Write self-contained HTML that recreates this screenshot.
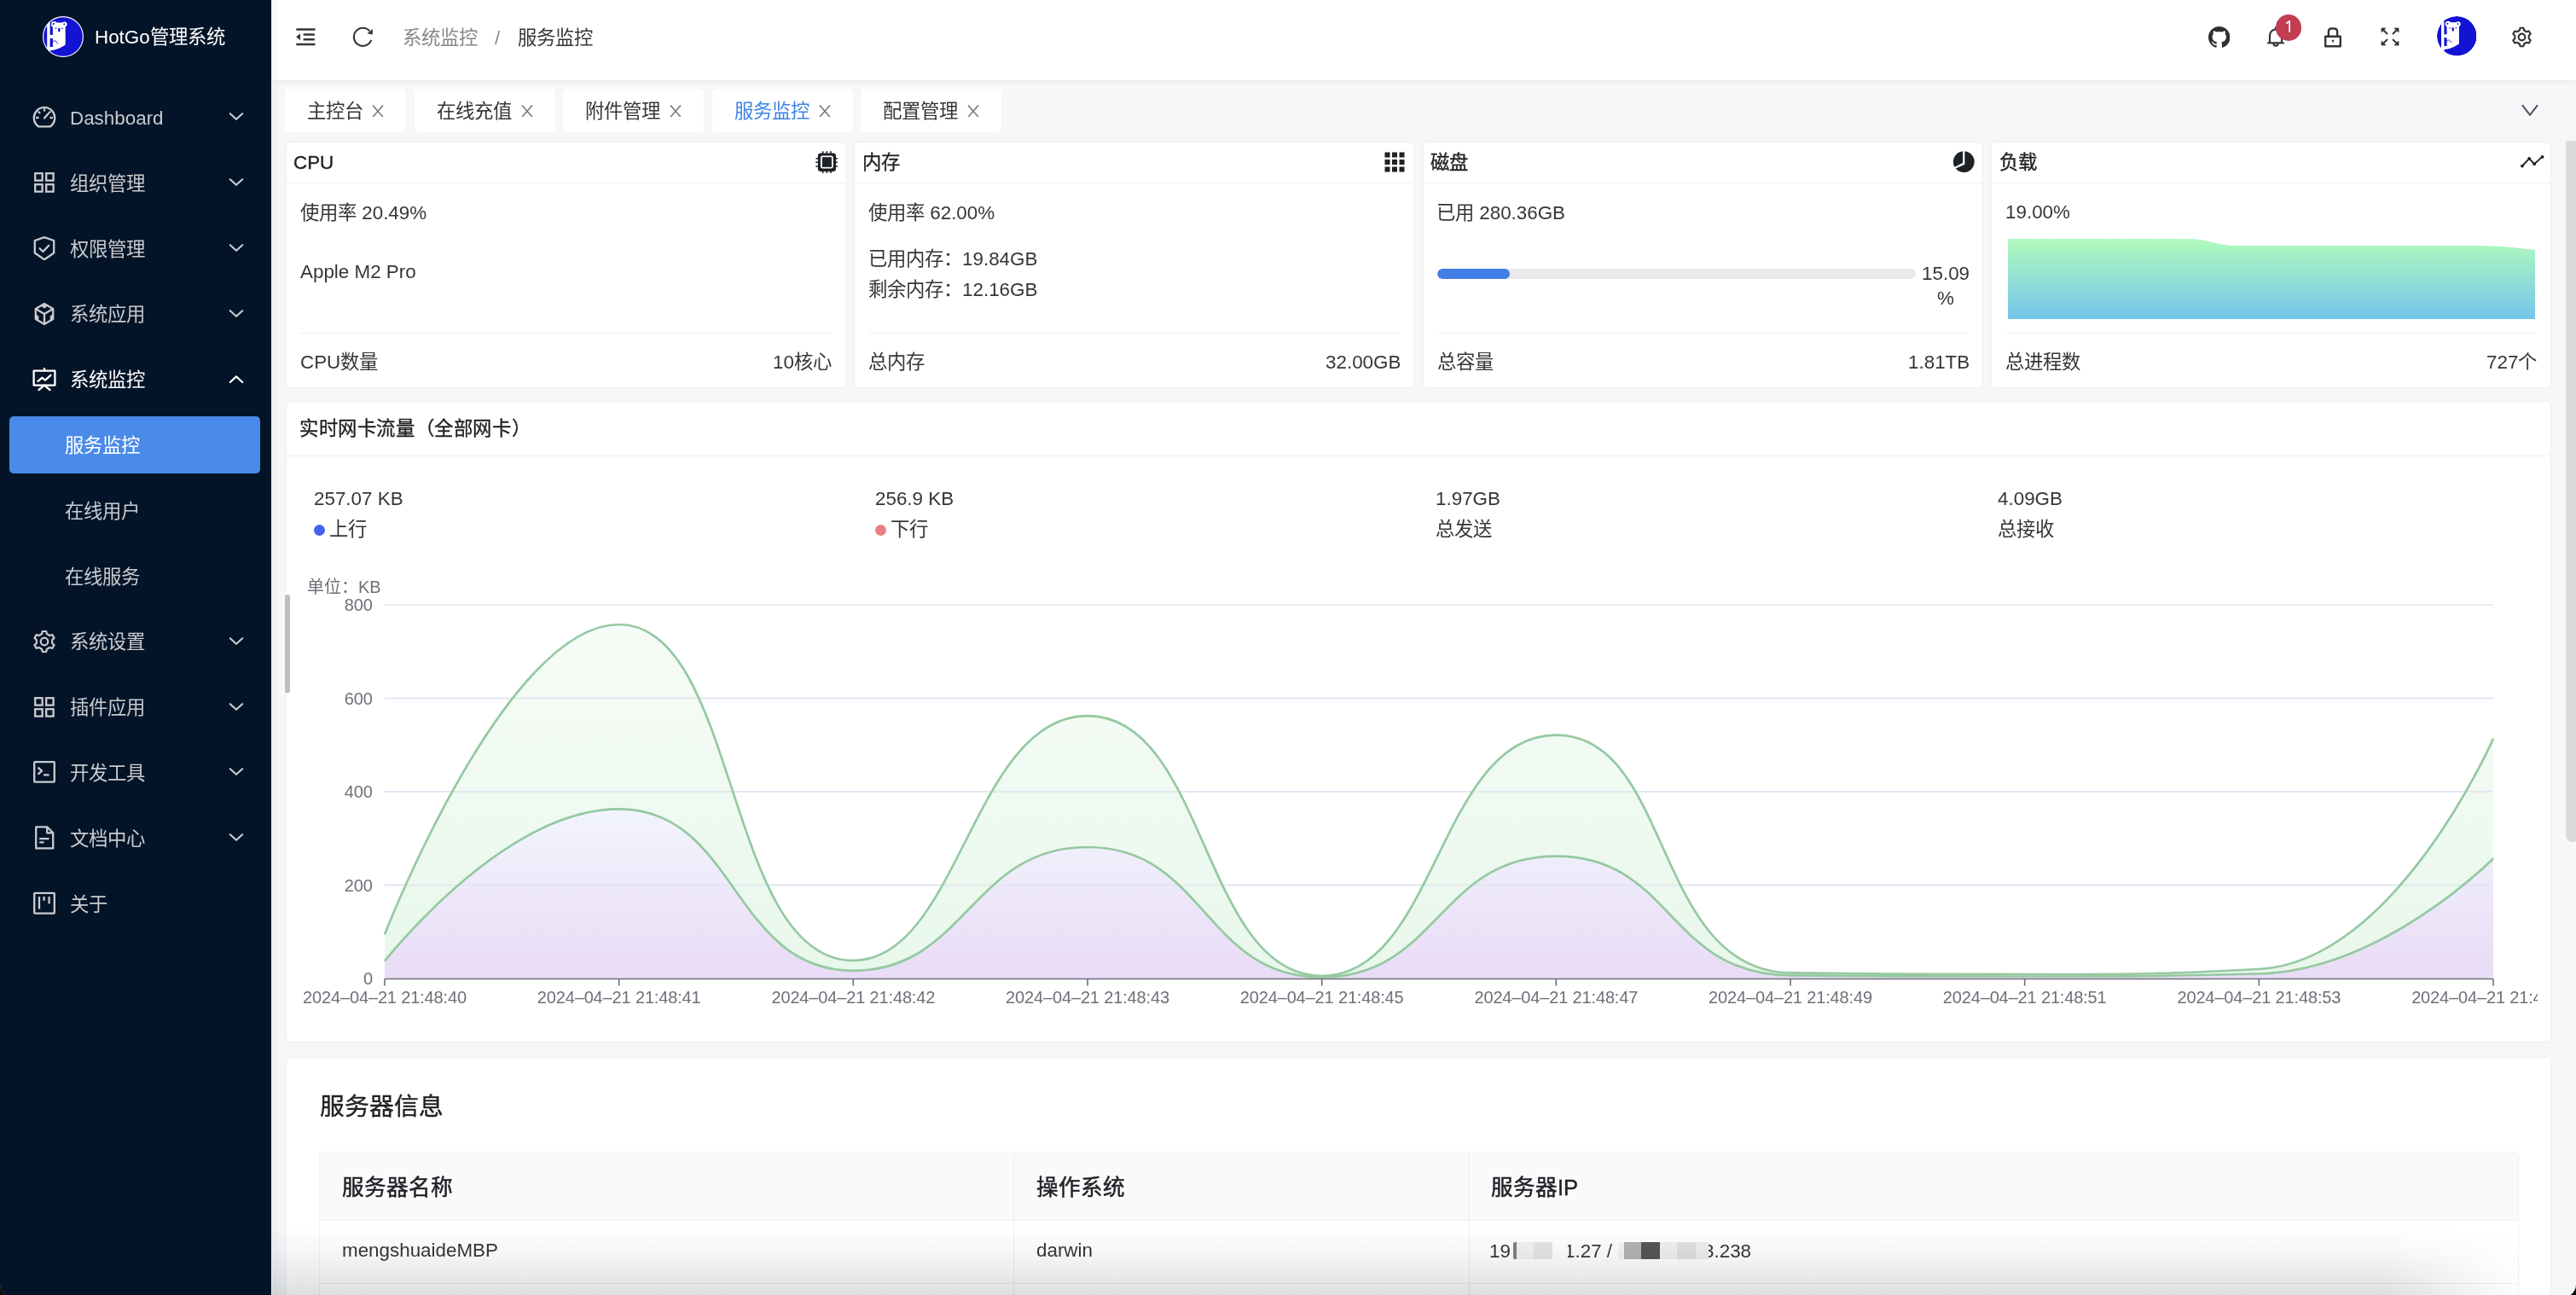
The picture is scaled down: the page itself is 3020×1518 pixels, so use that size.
<!DOCTYPE html>
<html lang="zh-CN">
<head>
<meta charset="utf-8">
<title>HotGo 服务监控</title>
<style>
*{box-sizing:border-box;margin:0;padding:0}
html,body{width:3020px;height:1518px;overflow:hidden;background:#f5f7f9;font-family:"Liberation Sans",sans-serif;color:#333639;font-size:22.4px;line-height:1}
.abs{position:absolute}
#sider{position:absolute;left:0;top:0;width:318px;height:1518px;background:#041428}
#sider .edge{position:absolute;left:318px;top:0;width:1px;height:1518px;background:#eef0f3}
.logo{position:absolute;left:50px;top:19px;width:48px;height:48px}
.brand{position:absolute;left:111px;top:32px;color:#fff;font-size:22.4px;line-height:24px;white-space:nowrap}
.mi{position:absolute;left:11px;width:294px;height:67.2px;border-radius:5px}
.mi .ic{position:absolute;left:27px;top:19.6px;width:28px;height:28px}
.mi .tx{position:absolute;left:71px;top:23.1px;line-height:24px;font-size:22.4px;color:#c9cbcf;white-space:nowrap}
.mi .tx.sub{left:64.5px}
.mi .cv{position:absolute;left:257px;top:24.6px;width:18px;height:18px}
.mi.sel{background:#4a8ae8}
.mi.sel .tx{color:#fff}
#header{position:absolute;left:319px;top:0;width:2701px;height:94px;background:#fff;box-shadow:0 1px 6px rgba(0,21,41,0.08)}
.crumb{position:absolute;top:33px;font-size:22.4px;line-height:24px;white-space:nowrap}
.tab{position:absolute;top:104px;height:51px;background:#fff;border-radius:5px}
.tab .t{position:absolute;left:26px;top:15px;line-height:24px;font-size:22.4px;white-space:nowrap}
.tab .x{position:absolute;top:18.5px;width:14px;height:14px}
.card{position:absolute;background:#fff;border:1px solid #efeff5;border-radius:5px}
.card .hd{position:absolute;left:0;top:0;right:0;height:48px;border-bottom:1px solid #efeff5}
.card .ttl{position:absolute;left:8.6px;top:12px;line-height:24px;font-size:22.4px;color:#1f2225;font-weight:500;white-space:nowrap;-webkit-text-stroke:0.35px #1f2225}
.card .hic{position:absolute;top:10px;right:9px;width:26px;height:26px}
.txt{position:absolute;line-height:24px;font-size:22.4px;white-space:nowrap;color:#333639}
.card .div{position:absolute;left:16px;right:16px;top:223px;height:1px;background:#efeff5}
.brand,.mi .tx,.crumb,.tab .t,.txt,.card .ttl,svg.chartsvg{will-change:transform}
</style>
</head>
<body>
<div id="sider">
  <svg class="logo" viewBox="0 0 48 48">
    <defs><clipPath id="lc"><circle cx="24" cy="24" r="23.6"/></clipPath></defs>
    <circle cx="24" cy="24" r="23.6" fill="#1313d3"/>
    <g clip-path="url(#lc)">
    <g fill="#fff">
      <rect x="5.2" y="0" width="3.6" height="44"/>
      <path d="M8.4,7.4 H26.7 V33.5 C22,36.5 15.5,40 8.4,40.3 Z"/>
    </g>
    <g fill="#1313d3">
      <rect x="8.7" y="0" width="3.2" height="21.9"/>
      <rect x="8.7" y="26" width="3.2" height="10"/>
    </g>
    <g fill="#fff"><circle cx="13.4" cy="9.4" r="3.4"/><circle cx="25.6" cy="9.4" r="3.0"/><rect x="12" y="8" width="14" height="6"/></g>
    <g fill="#1313d3">
      <ellipse cx="12.7" cy="9.0" rx="1.2" ry="1.0" transform="rotate(-35 12.7 9)"/><ellipse cx="25.3" cy="9.3" rx="1.0" ry="0.9" transform="rotate(35 25.3 9.3)"/>
      <circle cx="15.6" cy="14.1" r="0.8"/><circle cx="23" cy="14.3" r="0.8"/>
      <ellipse cx="19.3" cy="15.9" rx="1.3" ry="2.5"/>
    </g>
    <path d="M11.3,31.2 C11.8,28.6 15.6,27.2 17.5,32.3" stroke="#1313d3" stroke-width="0.9" fill="none"/>
    </g>
    <circle cx="24" cy="24" r="23.4" fill="none" stroke="#fff" stroke-width="1.1"/>
  </svg>
  <div class="brand">HotGo管理系统</div>
  <!-- menu items -->
  <div class="mi" style="top:103.9px">
    <svg class="ic" viewBox="0 0 28 28" fill="none" stroke="#c9cbcf" stroke-width="2.3" stroke-linecap="round"><path d="M7.2,25.3 A12.2,12.2 0 1 1 20.8,25.3 Z" stroke-linejoin="round"/><path d="M14,5.2 V6.8 M7.5,8.3 L8.5,9.3 M20.5,8.3 L19.5,9.3 M5,15 H6.6 M21.4,15 H23 M14,15.5 L18.2,10.8"/></svg>
    <div class="tx">Dashboard</div>
    <svg class="cv" viewBox="0 0 18 18" fill="none" stroke="#c9cbcf" stroke-width="2.2" stroke-linecap="round" stroke-linejoin="round"><path d="M1.8,5.2 L9,11.8 L16.2,5.2"/></svg>
  </div>
  <div class="mi" style="top:180.7px">
    <svg class="ic" viewBox="0 0 28 28" fill="none" stroke="#c9cbcf" stroke-width="2.3"><rect x="3.2" y="3.2" width="8.4" height="8.4"/><rect x="16.2" y="3.2" width="8.4" height="8.4"/><rect x="3.2" y="16.2" width="8.4" height="8.4"/><rect x="16.2" y="16.2" width="8.4" height="8.4"/></svg>
    <div class="tx">组织管理</div>
    <svg class="cv" viewBox="0 0 18 18" fill="none" stroke="#c9cbcf" stroke-width="2.2" stroke-linecap="round" stroke-linejoin="round"><path d="M1.8,5.2 L9,11.8 L16.2,5.2"/></svg>
  </div>
  <div class="mi" style="top:257.5px">
    <svg class="ic" viewBox="0 0 28 28" fill="none" stroke="#c9cbcf" stroke-width="2.3" stroke-linejoin="round" stroke-linecap="round"><path d="M14,1.2 L25.2,5 L25.2,19.5 L14,27.3 L2.8,19.5 L2.8,5 Z"/><path d="M8.6,14.2 L12.4,18 L19.2,10.8"/></svg>
    <div class="tx">权限管理</div>
    <svg class="cv" viewBox="0 0 18 18" fill="none" stroke="#c9cbcf" stroke-width="2.2" stroke-linecap="round" stroke-linejoin="round"><path d="M1.8,5.2 L9,11.8 L16.2,5.2"/></svg>
  </div>
  <div class="mi" style="top:334.3px">
    <svg class="ic" viewBox="0 0 28 28" fill="none" stroke="#c9cbcf" stroke-width="2.3" stroke-linejoin="round"><path d="M14,2 L24.2,8 L24.2,20 L14,26 L3.8,20 L3.8,8 Z"/><path d="M3.8,8 L14,14 L24.2,8 M14,14 V26"/><path d="M10.4,4.2 L14,7.2 L17.6,4.2 L14,2 Z M3.8,14.8 L6.8,16.6 L6.8,21.8 L3.8,20 Z M24.2,14.8 L21.2,16.6 L21.2,21.8 L24.2,20 Z" fill="#c9cbcf" stroke-width="1"/></svg>
    <div class="tx">系统应用</div>
    <svg class="cv" viewBox="0 0 18 18" fill="none" stroke="#c9cbcf" stroke-width="2.2" stroke-linecap="round" stroke-linejoin="round"><path d="M1.8,5.2 L9,11.8 L16.2,5.2"/></svg>
  </div>
  <div class="mi" style="top:411.1px">
    <svg class="ic" viewBox="0 0 28 28" fill="none" stroke="#ffffff" stroke-width="2.3" stroke-linecap="round" stroke-linejoin="round"><rect x="1.6" y="3.6" width="24.8" height="17"/><path d="M14,0.8 V3.6 M14,20.6 L7.5,26 M14,20.6 L20.5,26 M6.5,15.8 L11.2,11.8 L15,14.6 L21.4,8.8"/></svg>
    <div class="tx" style="color:#fff">系统监控</div>
    <svg class="cv" viewBox="0 0 18 18" fill="none" stroke="#ffffff" stroke-width="2.2" stroke-linecap="round" stroke-linejoin="round"><path d="M1.8,12 L9,5.4 L16.2,12"/></svg>
  </div>
  <div class="mi sel" style="top:487.9px">
    <div class="tx sub">服务监控</div>
  </div>
  <div class="mi" style="top:564.7px">
    <div class="tx sub">在线用户</div>
  </div>
  <div class="mi" style="top:641.5px">
    <div class="tx sub">在线服务</div>
  </div>
  <div class="mi" style="top:718.3px">
    <svg class="ic" viewBox="0 0 28 28" fill="none" stroke="#c9cbcf" stroke-width="2.2" stroke-linejoin="round"><path d="M11.84,1.99 L16.16,1.99 L16.90,5.06 L20.29,7.01 L23.32,6.13 L25.48,9.87 L23.19,12.05 L23.19,15.95 L25.48,18.13 L23.32,21.87 L20.29,20.99 L16.90,22.94 L16.16,26.01 L11.84,26.01 L11.10,22.94 L7.71,20.99 L4.68,21.87 L2.52,18.13 L4.81,15.95 L4.81,12.05 L2.52,9.87 L4.68,6.13 L7.71,7.01 L11.10,5.06 Z"/><circle cx="14" cy="14" r="4.3"/></svg>
    <div class="tx">系统设置</div>
    <svg class="cv" viewBox="0 0 18 18" fill="none" stroke="#c9cbcf" stroke-width="2.2" stroke-linecap="round" stroke-linejoin="round"><path d="M1.8,5.2 L9,11.8 L16.2,5.2"/></svg>
  </div>
  <div class="mi" style="top:795.1px">
    <svg class="ic" viewBox="0 0 28 28" fill="none" stroke="#c9cbcf" stroke-width="2.3"><rect x="3.2" y="3.2" width="8.4" height="8.4"/><rect x="16.2" y="3.2" width="8.4" height="8.4"/><rect x="3.2" y="16.2" width="8.4" height="8.4"/><rect x="16.2" y="16.2" width="8.4" height="8.4"/></svg>
    <div class="tx">插件应用</div>
    <svg class="cv" viewBox="0 0 18 18" fill="none" stroke="#c9cbcf" stroke-width="2.2" stroke-linecap="round" stroke-linejoin="round"><path d="M1.8,5.2 L9,11.8 L16.2,5.2"/></svg>
  </div>
  <div class="mi" style="top:871.9px">
    <svg class="ic" viewBox="0 0 28 28" fill="none" stroke="#c9cbcf" stroke-width="2.3" stroke-linejoin="round"><rect x="2.2" y="2.2" width="23.6" height="23.4" rx="0.8"/><path d="M6.6,8.6 L11,12.6 L6.6,16.6 M13,17.3 H19.6"/></svg>
    <div class="tx">开发工具</div>
    <svg class="cv" viewBox="0 0 18 18" fill="none" stroke="#c9cbcf" stroke-width="2.2" stroke-linecap="round" stroke-linejoin="round"><path d="M1.8,5.2 L9,11.8 L16.2,5.2"/></svg>
  </div>
  <div class="mi" style="top:948.7px">
    <svg class="ic" viewBox="0 0 28 28" fill="none" stroke="#c9cbcf" stroke-width="2.3" stroke-linejoin="round"><path d="M4.2,1.3 H17.2 L24.2,8.3 V26.4 H4.2 Z M17.2,1.3 V8.3 H24.2"/><path d="M8.2,15.2 H19.5 M8.2,19.3 H13.5"/></svg>
    <div class="tx">文档中心</div>
    <svg class="cv" viewBox="0 0 18 18" fill="none" stroke="#c9cbcf" stroke-width="2.2" stroke-linecap="round" stroke-linejoin="round"><path d="M1.8,5.2 L9,11.8 L16.2,5.2"/></svg>
  </div>
  <div class="mi" style="top:1025.5px">
    <svg class="ic" viewBox="0 0 28 28" fill="none" stroke="#c9cbcf" stroke-width="2.3" stroke-linejoin="round"><rect x="2.2" y="1.8" width="23.6" height="23.8" rx="0.8"/><path d="M8,6 V20.5 M13.6,6 V10.8 M19.6,6 V14.2"/></svg>
    <div class="tx">关于</div>
  </div>
  <div class="edge"></div>
</div>
<div id="header">
  <!-- fold icon -->
  <svg class="abs" style="left:27px;top:32px" width="24" height="22" viewBox="0 0 24 22" fill="none" stroke="#333639" stroke-width="2.5"><path d="M1.3,2.4 H23.6 M9.6,8.4 H22.8 M9.6,14.3 H22.8 M1.3,20.1 H23.6"/><path d="M1.2,11.3 L6,7.3 V15.3 Z" fill="#333639" stroke="none"/></svg>
  <!-- refresh -->
  <svg class="abs" style="left:93px;top:30px" width="27" height="27" viewBox="0 0 27 27" fill="none" stroke="#333639" stroke-width="2.1"><path d="M23.23,16.98 A10.5,10.5 0 1 1 21.26,6.34"/><path d="M24.6,4.6 L24.6,10.2 L19,9 Z" fill="#333639" stroke="#333639" stroke-width="0.6" stroke-linejoin="round"/></svg>
  <div class="crumb" style="left:152.5px;color:#86888c">系统监控</div>
  <div class="crumb" style="left:260.5px;color:#86888c">/</div>
  <div class="crumb" style="left:288px;color:#333639">服务监控</div>
  <!-- github -->
  <svg class="abs" style="left:2269.8px;top:31px" width="25.5" height="25.5" viewBox="0 0 16 16" fill="#2f3235"><path d="M8 0C3.58 0 0 3.58 0 8c0 3.54 2.29 6.53 5.47 7.59.4.07.55-.17.55-.38 0-.19-.01-.82-.01-1.49-2.01.37-2.53-.49-2.69-.94-.09-.23-.48-.94-.82-1.13-.28-.15-.68-.52-.01-.53.63-.01 1.08.58 1.23.82.72 1.210 1.87.87 2.33.66.07-.52.28-.87.51-1.07-1.78-.2-3.64-.89-3.64-3.95 0-.87.31-1.59.82-2.15-.08-.2-.36-1.02.08-2.12 0 0 .67-.21 2.2.82.64-.18 1.32-.27 2-.27.68 0 1.36.09 2 .27 1.53-1.04 2.2-.82 2.2-.82.44 1.1.16 1.92.08 2.12.51.56.82 1.27.82 2.15 0 3.07-1.87 3.75-3.65 3.95.29.25.54.73.54 1.48 0 1.07-.01 1.93-.01 2.2 0 .21.15.46.55.38A8.013 8.013 0 0016 8c0-4.42-3.58-8-8-8z"/></svg>
  <!-- bell -->
  <svg class="abs" style="left:2338px;top:30px" width="22" height="27" viewBox="0 0 22 27" fill="none" stroke="#333639" stroke-width="2.2" stroke-linejoin="round"><path d="M4,19.5 V11.5 A7,7 0 0 1 18,11.5 V19.5"/><path d="M1.2,20.3 H20.8"/><path d="M8.4,21 A2.6,2.6 0 0 0 13.6,21"/><path d="M11,2.2 V4.4" stroke-linecap="round"/></svg>
  <div class="abs" style="left:2348.7px;top:17px;width:30.7px;height:30.7px;border-radius:50%;background:#c23d52;color:#fff;font-size:19.2px;"><svg class="abs" style="left:10px;top:7.3px" width="10" height="14" viewBox="0 0 10 14" fill="none" stroke="#fff" stroke-width="1.7" stroke-linejoin="round"><path d="M6.2,13.8 V0.8 L2.2,3.6"/></svg></div>
  <!-- lock -->
  <svg class="abs" style="left:2405px;top:31px" width="22" height="25" viewBox="0 0 22 25" fill="none" stroke="#333639" stroke-width="2.4" stroke-linejoin="round"><rect x="2.2" y="11.8" width="17.6" height="11.4"/><path d="M5.9,11.8 V6 Q5.9,2.5 9.4,2.5 H12.6 Q16.1,2.5 16.1,6 V11.8"/><path d="M10,16.2 H12 L11,18.6 Z" fill="#333639" stroke-width="0.8"/></svg>
  <!-- fullscreen (exit) -->
  <svg class="abs" style="left:2472px;top:32px" width="22" height="22" viewBox="0 0 22 22" fill="none" stroke="#333639" stroke-width="2.0"><path d="M2,2 L8,8 M20,2 L14,8 M2,20 L8,14 M20,20 L14,14"/><path d="M1,1 H5.8 L1,5.8 Z M21,1 H16.2 L21,5.8 Z M1,21 H5.8 L1,16.2 Z M21,21 H16.2 L21,16.2 Z" fill="#333639" stroke-width="0.8" stroke-linejoin="round"/></svg>
  <!-- avatar -->
  <svg class="abs" style="left:2537.7px;top:19.3px" width="46.6" height="46.6" viewBox="0 0 48 48">
    <defs><clipPath id="ac"><circle cx="24" cy="24" r="24"/></clipPath></defs>
    <g clip-path="url(#ac)">
    <circle cx="24" cy="24" r="24" fill="#1313d3"/>
    <g fill="#fff">
      <rect x="5.2" y="0" width="3.6" height="44"/>
      <path d="M8.4,7.4 H26.7 V33.5 C22,36.5 15.5,40 8.4,40.3 Z"/>
    </g>
    <g fill="#1313d3">
      <rect x="8.7" y="0" width="3.2" height="21.9"/>
      <rect x="8.7" y="26" width="3.2" height="10"/>
    </g>
    <g fill="#fff"><circle cx="13.4" cy="9.4" r="3.4"/><circle cx="25.6" cy="9.4" r="3.0"/><rect x="12" y="8" width="14" height="6"/></g>
    <g fill="#1313d3">
      <ellipse cx="12.7" cy="9.0" rx="1.2" ry="1.0" transform="rotate(-35 12.7 9)"/><ellipse cx="25.3" cy="9.3" rx="1.0" ry="0.9" transform="rotate(35 25.3 9.3)"/>
      <circle cx="15.6" cy="14.1" r="0.8"/><circle cx="23" cy="14.3" r="0.8"/>
      <ellipse cx="19.3" cy="15.9" rx="1.3" ry="2.5"/>
    </g>
    <path d="M11.3,31.2 C11.8,28.6 15.6,27.2 17.5,32.3" stroke="#1313d3" stroke-width="0.9" fill="none"/>
    </g>
  </svg>
  <!-- gear -->
  <svg class="abs" style="left:2625px;top:31px" width="25" height="25" viewBox="0 0 28 28" fill="none" stroke="#333639" stroke-width="2.4" stroke-linejoin="round"><path d="M11.84,1.99 L16.16,1.99 L16.90,5.06 L20.29,7.01 L23.32,6.13 L25.48,9.87 L23.19,12.05 L23.19,15.95 L25.48,18.13 L23.32,21.87 L20.29,20.99 L16.90,22.94 L16.16,26.01 L11.84,26.01 L11.10,22.94 L7.71,20.99 L4.68,21.87 L2.52,18.13 L4.81,15.95 L4.81,12.05 L2.52,9.87 L4.68,6.13 L7.71,7.01 L11.10,5.06 Z"/><circle cx="14" cy="14" r="4.3"/></svg>
</div>
<div class="abs" style="left:319px;top:0;width:10px;height:1518px;background:linear-gradient(to right,rgba(0,10,20,0.03),rgba(0,10,20,0));pointer-events:none"></div>
<div class="tab" style="left:333.8px;width:142.2px"><div class="t">主控台</div><svg class="x" height="14.6" style="left:102.5px" viewBox="0 0 14 14" stroke="#6f737b" stroke-width="1.45" fill="none"><path d="M1,0.4 L13,14.2 M13,0.4 L1,14.2"/></svg></div>
<div class="tab" style="left:485.7px;width:165px"><div class="t">在线充值</div><svg class="x" height="14.6" style="left:125px" viewBox="0 0 14 14" stroke="#6f737b" stroke-width="1.45" fill="none"><path d="M1,0.4 L13,14.2 M13,0.4 L1,14.2"/></svg></div>
<div class="tab" style="left:660px;width:164.7px"><div class="t">附件管理</div><svg class="x" height="14.6" style="left:125px" viewBox="0 0 14 14" stroke="#6f737b" stroke-width="1.45" fill="none"><path d="M1,0.4 L13,14.2 M13,0.4 L1,14.2"/></svg></div>
<div class="tab" style="left:834.8px;width:165px"><div class="t" style="color:#3d84e6">服务监控</div><svg class="x" height="14.6" style="left:125px" viewBox="0 0 14 14" stroke="#6f737b" stroke-width="1.45" fill="none"><path d="M1,0.4 L13,14.2 M13,0.4 L1,14.2"/></svg></div>
<div class="tab" style="left:1009px;width:164.7px"><div class="t">配置管理</div><svg class="x" height="14.6" style="left:125px" viewBox="0 0 14 14" stroke="#6f737b" stroke-width="1.45" fill="none"><path d="M1,0.4 L13,14.2 M13,0.4 L1,14.2"/></svg></div>
<svg class="abs" style="left:2956px;top:122px" width="20" height="14" viewBox="0 0 20 14" fill="none" stroke="#4f5359" stroke-width="2" stroke-linejoin="round"><path d="M1,1.2 L10,12.8 L19,1.2"/></svg>
<!-- page scrollbar -->
<div class="abs" style="left:3008px;top:165px;width:12px;height:1353px;background:#f7f7f7"></div>
<div class="abs" style="left:3008px;top:165px;width:16px;height:822px;background:#dbdbdb;border-radius:0 0 8px 8px"></div>
<!-- CPU -->
<div class="card" style="left:334.7px;top:165.9px;width:657.1px;height:289px">
  <div class="hd"><div class="ttl">CPU</div>
    <svg class="hic" style="right:9px;top:10px" width="26" height="26" viewBox="0 0 26 26"><path d="M8.7,0.9 V3 M13.3,0.9 V3 M18,0.9 V3 M8.7,23.5 V25.6 M13.3,23.5 V25.6 M18,23.5 V25.6 M0.9,8.7 H3 M0.9,13.3 H3 M0.9,18 H3 M23.5,8.7 H25.6 M23.5,13.3 H25.6 M23.5,18 H25.6" stroke="#1f2225" stroke-width="1.6" stroke-linecap="round"/><rect x="2.9" y="2.5" width="21.1" height="21.5" rx="3.2" fill="#1f2225"/><rect x="6.9" y="6.4" width="13" height="13.2" rx="1.5" fill="none" stroke="#fff" stroke-width="1.9"/><rect x="8.2" y="7.7" width="10.6" height="10.8" fill="#1f2225"/></svg>
  </div>
  <div class="txt" style="left:16px;top:71.5px">使用率 20.49%</div>
  <div class="txt" style="left:16px;top:140px">Apple M2 Pro</div>
  <div class="div"></div>
  <div class="txt" style="left:16px;top:246.5px">CPU数量</div>
  <div class="txt" style="right:16px;top:246.5px">10核心</div>
</div>
<!-- MEM -->
<div class="card" style="left:1001.4px;top:165.9px;width:656.6px;height:289px">
  <div class="hd"><div class="ttl">内存</div>
    <svg class="hic" style="right:10px;top:11px;width:24px;height:24px" width="24" height="24" viewBox="0 0 24 24" fill="#1f2225"><rect x="0.5" y="0.5" width="6" height="6"/><rect x="9" y="0.5" width="6" height="6"/><rect x="17.5" y="0.5" width="6" height="6"/><rect x="0.5" y="9" width="6" height="6"/><rect x="9" y="9" width="6" height="6"/><rect x="17.5" y="9" width="6" height="6"/><rect x="0.5" y="17.5" width="6" height="6"/><rect x="9" y="17.5" width="6" height="6"/><rect x="17.5" y="17.5" width="6" height="6"/></svg>
  </div>
  <div class="txt" style="left:16px;top:71.5px">使用率 62.00%</div>
  <div class="txt" style="left:16px;top:125px">已用内存：19.84GB</div>
  <div class="txt" style="left:16px;top:161px">剩余内存：12.16GB</div>
  <div class="div"></div>
  <div class="txt" style="left:16px;top:246.5px">总内存</div>
  <div class="txt" style="right:14.5px;top:246.5px">32.00GB</div>
</div>
<!-- DISK -->
<div class="card" style="left:1667.8px;top:165.9px;width:657.2px;height:289px">
  <div class="hd"><div class="ttl">磁盘</div>
    <svg class="hic" style="right:7.8px;top:10.5px" width="26" height="26" viewBox="0 -0.3 26 26" fill="#1f2225"><path d="M11.1,-0.04 V13.6 L1.56,18.5 A12.4,12.4 0 0 1 11.1,-0.04 Z"/><path d="M13.4,-0.04 A12.4,12.4 0 1 1 2.7,20.15 L13.4,15.4 Z"/></svg>
  </div>
  <div class="txt" style="left:15px;top:71.5px">已用 280.36GB</div>
  <div class="abs" style="left:16.3px;top:148px;width:561px;height:12.6px;border-radius:7px;background:#e9e9ea;overflow:hidden"><div style="width:84.7px;height:100%;background:#427ee5;border-radius:7px"></div></div>
  <div class="txt" style="left:584px;top:139px;width:56px;text-align:center;white-space:normal;line-height:29px">15.09<br>%</div>
  <div class="div"></div>
  <div class="txt" style="left:16px;top:246.5px">总容量</div>
  <div class="txt" style="right:14.5px;top:246.5px">1.81TB</div>
</div>
<!-- LOAD -->
<div class="card" style="left:2334.2px;top:165.9px;width:656.8px;height:289px">
  <div class="hd"><div class="ttl">负载</div>
    <svg class="hic" style="right:7px;top:15.5px;width:28px;height:15px" width="28" height="15" viewBox="0 0 28 15" fill="none" stroke="#1f2225" stroke-width="1.9"><path d="M1.6,13 L10.2,3.8 L16.2,10.2 L25.6,1.6"/><g fill="#1f2225" stroke="none"><circle cx="1.9" cy="12.6" r="1.9"/><circle cx="10.2" cy="3.8" r="1.9"/><circle cx="16.2" cy="10.2" r="1.9"/><circle cx="25.6" cy="1.9" r="1.9"/></g></svg>
  </div>
  <div class="txt" style="left:16px;top:70px">19.00%</div>
  <svg class="abs" style="left:19.1px;top:112.2px" width="618" height="95" viewBox="0 0 618 95"><defs><linearGradient id="lg" x1="0" y1="0" x2="0" y2="1"><stop offset="0" stop-color="#b1fabd"/><stop offset="1" stop-color="#74c5eb"/></linearGradient></defs><path d="M0,1 H211 C233,1 246,9 268,9 H552 C580,9 600,12 618,14 V95 H0 Z" fill="url(#lg)"/></svg>
  <div class="div"></div>
  <div class="txt" style="left:16px;top:246.5px">总进程数</div>
  <div class="txt" style="right:16px;top:246.5px">727个</div>
</div>
<!-- NET CHART CARD -->
<div class="card" style="left:334.7px;top:469.8px;width:2656.3px;height:752.2px">
  <div class="hd" style="height:64.5px"><div class="ttl" style="left:15.5px;top:20.5px;letter-spacing:0.6px">实时网卡流量（全部网卡）</div></div>
  <div class="txt" style="left:32px;top:102.5px">257.07 KB</div>
  <div class="abs" style="left:32.3px;top:144.7px;width:13px;height:13px;border-radius:50%;background:#4263eb"></div>
  <div class="txt" style="left:50px;top:138.5px">上行</div>
  <div class="txt" style="left:690px;top:102.5px">256.9 KB</div>
  <div class="abs" style="left:690.3px;top:144.7px;width:13px;height:13px;border-radius:50%;background:#e88080"></div>
  <div class="txt" style="left:708px;top:138.5px">下行</div>
  <div class="txt" style="left:1347.5px;top:102.5px">1.97GB</div>
  <div class="txt" style="left:1347.5px;top:138.5px">总发送</div>
  <div class="txt" style="left:2006.5px;top:102.5px">4.09GB</div>
  <div class="txt" style="left:2006.5px;top:138.5px">总接收</div>
</div>
<svg class="abs chartsvg" style="left:0;top:0" width="3020" height="1518" viewBox="0 0 3020 1518">
  <defs>
    <linearGradient id="gLo" x1="0" y1="0" x2="0" y2="1"><stop offset="0" stop-color="#f2f5fd"/><stop offset="1" stop-color="#e9dbf6"/></linearGradient>
    <linearGradient id="gUp" x1="0" y1="0" x2="0" y2="1"><stop offset="0" stop-color="#f5fcf6"/><stop offset="1" stop-color="#e6f6e9"/></linearGradient>
    <clipPath id="cc"><rect x="335" y="470" width="2640" height="752"/></clipPath>
  </defs>
  <g font-family="Liberation Sans, sans-serif" font-size="20" fill="#6e7079">
    <text x="360" y="695">单位：KB</text>
    <g text-anchor="end">
      <text x="437" y="716">800</text>
      <text x="437" y="825.5">600</text>
      <text x="437" y="935">400</text>
      <text x="437" y="1044.5">200</text>
      <text x="437" y="1154">0</text>
    </g>
  </g>
  <g stroke="#e0e6f1" stroke-width="1.6">
    <path d="M451,709 H2923 M451,818.5 H2923 M451,928 H2923 M451,1037.5 H2923"/>
  </g>
  <path d="M451.00,1126.70 C451.00,1126.70 589.62,948.40 725.67,948.40 C864.29,948.40 858.07,1137.80 1000.34,1137.80 C1132.74,1137.80 1138.48,993.00 1275.01,993.00 C1413.15,993.00 1411.24,1145.50 1549.68,1145.50 C1685.91,1145.50 1686.80,1003.60 1824.35,1003.60 C1961.47,1003.60 1953.79,1142.17 2099.02,1143.40 C2228.46,1144.50 2236.36,1144.50 2373.69,1144.50 C2511.03,1144.50 2518.47,1144.50 2648.36,1141.50 C2793.14,1138.16 2923.03,1006.20 2923.03,1006.20 L2923.03,1147.50 L451.00,1147.50 Z" fill="url(#gLo)"/>
  <path d="M451.00,1095.30 C451.00,1095.30 591.97,732.00 725.67,732.00 C866.64,732.00 849.98,1125.90 1000.34,1125.90 C1124.65,1125.90 1139.93,839.20 1275.01,839.20 C1414.60,839.20 1409.54,1144.00 1549.68,1144.00 C1684.21,1144.00 1686.57,861.70 1824.35,861.70 C1961.24,861.70 1937.63,1138.12 2099.02,1140.40 C2212.30,1142.00 2236.37,1142.00 2373.69,1142.00 C2511.04,1142.00 2534.05,1142.00 2648.36,1136.00 C2808.72,1127.58 2923.03,865.60 2923.03,865.60 L2923.03,1006.20 C2923.03,1006.20 2793.14,1138.16 2648.36,1141.50 C2518.47,1144.50 2511.03,1144.50 2373.69,1144.50 C2236.36,1144.50 2228.46,1144.50 2099.02,1143.40 C1953.79,1142.17 1961.47,1003.60 1824.35,1003.60 C1686.80,1003.60 1685.91,1145.50 1549.68,1145.50 C1411.24,1145.50 1413.15,993.00 1275.01,993.00 C1138.48,993.00 1132.74,1137.80 1000.34,1137.80 C858.07,1137.80 864.29,948.40 725.67,948.40 C589.62,948.40 451.00,1126.70 451.00,1126.70 Z" fill="url(#gUp)" fill-opacity="0.9"/>
  <path d="M451,818.5 H2923 M451,928 H2923 M451,1037.5 H2923" stroke="#dde3f1" stroke-width="1.6" opacity="0.95"/>
  <path d="M451.00,1126.70 C451.00,1126.70 589.62,948.40 725.67,948.40 C864.29,948.40 858.07,1137.80 1000.34,1137.80 C1132.74,1137.80 1138.48,993.00 1275.01,993.00 C1413.15,993.00 1411.24,1145.50 1549.68,1145.50 C1685.91,1145.50 1686.80,1003.60 1824.35,1003.60 C1961.47,1003.60 1953.79,1142.17 2099.02,1143.40 C2228.46,1144.50 2236.36,1144.50 2373.69,1144.50 C2511.03,1144.50 2518.47,1144.50 2648.36,1141.50 C2793.14,1138.16 2923.03,1006.20 2923.03,1006.20" fill="none" stroke="#95c9a1" stroke-width="2.7"/>
  <path d="M451.00,1095.30 C451.00,1095.30 591.97,732.00 725.67,732.00 C866.64,732.00 849.98,1125.90 1000.34,1125.90 C1124.65,1125.90 1139.93,839.20 1275.01,839.20 C1414.60,839.20 1409.54,1144.00 1549.68,1144.00 C1684.21,1144.00 1686.57,861.70 1824.35,861.70 C1961.24,861.70 1937.63,1138.12 2099.02,1140.40 C2212.30,1142.00 2236.37,1142.00 2373.69,1142.00 C2511.04,1142.00 2534.05,1142.00 2648.36,1136.00 C2808.72,1127.58 2923.03,865.60 2923.03,865.60" fill="none" stroke="#95c9a1" stroke-width="2.7"/>
  <g stroke="#6e7079" stroke-width="1.6">
    <path d="M451,1147.5 H2923"/>
    <path d="M451.00,1147.5 V1155.5 M725.67,1147.5 V1155.5 M1000.34,1147.5 V1155.5 M1275.01,1147.5 V1155.5 M1549.68,1147.5 V1155.5 M1824.35,1147.5 V1155.5 M2099.02,1147.5 V1155.5 M2373.69,1147.5 V1155.5 M2648.36,1147.5 V1155.5 M2923.03,1147.5 V1155.5"/>
  </g>
  <g clip-path="url(#cc)" font-family="Liberation Sans, sans-serif" font-size="20" fill="#6e7079" text-anchor="middle" letter-spacing="-0.15">
    <text x="451.00" y="1176">2024–04–21 21:48:40</text>
<text x="725.67" y="1176">2024–04–21 21:48:41</text>
<text x="1000.34" y="1176">2024–04–21 21:48:42</text>
<text x="1275.01" y="1176">2024–04–21 21:48:43</text>
<text x="1549.68" y="1176">2024–04–21 21:48:45</text>
<text x="1824.35" y="1176">2024–04–21 21:48:47</text>
<text x="2099.02" y="1176">2024–04–21 21:48:49</text>
<text x="2373.69" y="1176">2024–04–21 21:48:51</text>
<text x="2648.36" y="1176">2024–04–21 21:48:53</text>
<text x="2923.03" y="1176">2024–04–21 21:48:55</text>
  </g>
  <!-- inner scrollbar thumb -->
  <rect x="334" y="697" width="6" height="115.6" rx="3" fill="#bfbfbf"/>
</svg>
<!-- SERVER INFO CARD -->
<div class="card" style="left:334.7px;top:1239.2px;width:2656.3px;height:400px">
  <div class="txt" style="left:39px;top:42px;font-size:28.8px;line-height:30px;color:#1f2225;-webkit-text-stroke:0.4px #1f2225">服务器信息</div>
  <div class="abs" style="left:38.7px;top:109.8px;width:2579px;height:300px;border:1px solid #efeff5;border-radius:5px;overflow:hidden">
    <div class="abs" style="left:0;top:0;width:100%;height:80px;background:#fafafc;border-bottom:1px solid #efeff5"></div>
    <div class="abs" style="left:813px;top:0;width:1px;height:300px;background:#efeff5"></div>
    <div class="abs" style="left:1347px;top:0;width:1px;height:300px;background:#efeff5"></div>
    <div class="abs" style="left:0;top:153px;width:100%;height:1px;background:#efeff5"></div>
    <div class="txt" style="left:26px;top:28px;font-size:25.6px;line-height:26px;color:#1f2225;-webkit-text-stroke:0.5px #1f2225">服务器名称</div>
    <div class="txt" style="left:840px;top:28px;font-size:25.6px;line-height:26px;color:#1f2225;-webkit-text-stroke:0.5px #1f2225">操作系统</div>
    <div class="txt" style="left:1373px;top:28px;font-size:25.6px;line-height:26px;color:#1f2225;-webkit-text-stroke:0.5px #1f2225">服务器IP</div>
    <div class="txt" style="left:26px;top:103px">mengshuaideMBP</div>
    <div class="txt" style="left:840px;top:103px">darwin</div>
    
  </div>
</div>
<!-- IP redacted -->
<div class="txt" style="left:1745.5px;top:1454.5px">19</div>
<div class="txt" style="left:1834px;top:1454.5px">1.27 /</div>
<div class="txt" style="left:1997px;top:1454.5px">3.238</div>
<div class="abs" style="left:1773.5px;top:1456px;width:4.5px;height:20px;background:#808080;border-radius:2px 0 0 2px"></div>
<div class="abs" style="left:1778px;top:1456px;width:20px;height:20px;background:#f2f2f3"></div>
<div class="abs" style="left:1798px;top:1456px;width:22px;height:20px;background:#e6e6e8"></div>
<div class="abs" style="left:1820px;top:1456px;width:17.5px;height:20px;background:#ffffff"></div>
<div class="abs" style="left:1897px;top:1456px;width:7px;height:20px;background:#f4f4f4"></div>
<div class="abs" style="left:1904px;top:1456px;width:20px;height:20px;background:#b3b3b3"></div>
<div class="abs" style="left:1924px;top:1456px;width:22px;height:20px;background:#555555"></div>
<div class="abs" style="left:1946px;top:1456px;width:20px;height:20px;background:#f0f0f0"></div>
<div class="abs" style="left:1966px;top:1456px;width:22px;height:20px;background:#e0e0e0"></div>
<div class="abs" style="left:1988px;top:1456px;width:15px;height:20px;background:#eeeeee"></div>
<!-- bottom shade -->
<div class="abs" style="left:319px;top:1438px;width:2660px;height:80px;background:linear-gradient(to bottom,rgba(20,25,35,0) 0%,rgba(20,25,35,0.035) 35%,rgba(20,25,35,0.09) 70%,rgba(20,25,35,0.14) 100%);-webkit-mask-image:linear-gradient(to right,#000 0,#000 2480px,rgba(0,0,0,0) 2640px);pointer-events:none"></div>
<!-- window corners -->
<svg class="abs" style="left:0;top:1498px" width="20" height="20" viewBox="0 0 20 20"><path d="M0,8 A14,14 0 0 0 14,22 L0,22 Z" fill="#0a0a05"/><path d="M0,8 A14,14 0 0 0 14,22" fill="none" stroke="#3a4a5a" stroke-width="0.8" opacity="0.6"/></svg>
<svg class="abs" style="left:3000px;top:1498px" width="20" height="20" viewBox="0 0 20 20"><path d="M20,8 A14,14 0 0 1 6,22 L20,22 Z" fill="#0a0a05"/></svg>
</body>
</html>
